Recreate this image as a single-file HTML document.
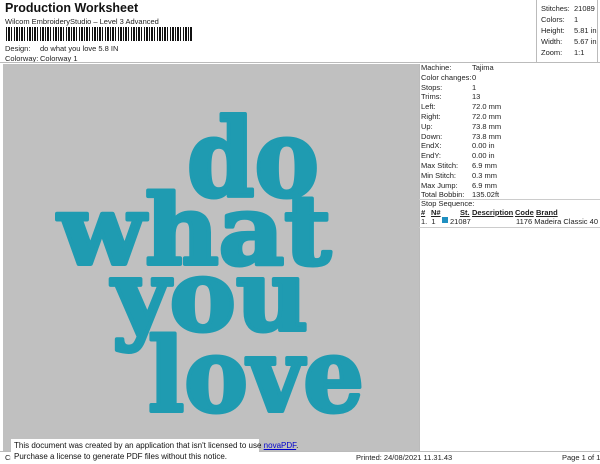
<!DOCTYPE html>
<html><head><meta charset="utf-8"><style>
*{margin:0;padding:0;box-sizing:border-box}
body{width:600px;height:464px;background:#fff;position:relative;overflow:hidden;font-family:"Liberation Sans",sans-serif;color:#222;font-size:7.5px}
.a{position:absolute;white-space:nowrap}
</style></head><body>
<div class="a" style="left:5px;top:1px;font-size:12.5px;font-weight:bold;color:#111">Production Worksheet</div>
<div class="a" style="left:5px;top:17px">Wilcom EmbroideryStudio – Level 3 Advanced</div>
<div class="a" style="left:6px;top:27px;width:186px;height:14px;background:repeating-linear-gradient(90deg,#111 0 1px,#fff 1px 2px,#111 2px 4px,#fff 4px 5px,#111 5px 6px,#fff 6px 8px,#111 8px 9px,#fff 9px 10px,#111 10px 12px,#fff 12px 13px)"></div>
<div class="a" style="left:5px;top:44px">Design:</div><div class="a" style="left:40px;top:44px">do what you love 5.8 IN</div>
<div class="a" style="left:5px;top:54px">Colorway:</div><div class="a" style="left:40px;top:54px">Colorway 1</div>
<div class="a" style="left:0;top:62px;width:600px;border-top:1px solid #bbb"></div>
<div class="a" style="left:536px;top:0;width:62px;height:62px;border-left:1px solid #bbb;border-right:1px solid #bbb"></div>
<div class="a" style="left:541px;top:3px;line-height:11px">Stitches:<br>Colors:<br>Height:<br>Width:<br>Zoom:</div>
<div class="a" style="left:574px;top:3px;line-height:11px">21089<br>1<br>5.81 in<br>5.67 in<br>1:1</div>
<div class="a" style="left:3px;top:64px;width:416px;height:387px;background:#c0c0c0"></div>
<svg class="a" style="left:0;top:0" width="600" height="464">
<g fill="#1f9bb1" font-family="DejaVu Serif" font-weight="bold" stroke="#1f9bb1" stroke-width="4" stroke-linejoin="round">
<text x="187" y="196" font-size="108" textLength="132" lengthAdjust="spacingAndGlyphs">do</text>
<text x="58" y="264" font-size="96" textLength="273" lengthAdjust="spacingAndGlyphs">what</text>
<text x="112" y="330" font-size="98" textLength="196" lengthAdjust="spacingAndGlyphs">you</text>
<text x="148" y="411" font-size="102" textLength="216" lengthAdjust="spacingAndGlyphs">love</text>
</g></svg>
<div class="a" style="left:419px;top:64px;width:181px;height:387px;border-left:1px solid #bbb"></div>
<div class="a" style="left:421px;top:63px;line-height:9.8px">Machine:<br>Color changes:<br>Stops:<br>Trims:<br>Left:<br>Right:<br>Up:<br>Down:<br>EndX:<br>EndY:<br>Max Stitch:<br>Min Stitch:<br>Max Jump:<br>Total Bobbin:</div>
<div class="a" style="left:472px;top:63px;line-height:9.8px">Tajima<br>0<br>1<br>13<br>72.0 mm<br>72.0 mm<br>73.8 mm<br>73.8 mm<br>0.00 in<br>0.00 in<br>6.9 mm<br>0.3 mm<br>6.9 mm<br>135.02ft</div>
<div class="a" style="left:419px;top:199px;width:181px;border-top:1px solid #ccc"></div>
<div class="a" style="left:421px;top:199px">Stop Sequence:</div>
<div class="a" style="left:421px;top:208px;font-weight:bold;text-decoration:underline">#</div>
<div class="a" style="left:431px;top:208px;font-weight:bold;text-decoration:underline">N#</div>
<div class="a" style="left:460px;top:208px;font-weight:bold;text-decoration:underline">St.</div>
<div class="a" style="left:472px;top:208px;font-weight:bold;text-decoration:underline">Description</div>
<div class="a" style="left:515px;top:208px;font-weight:bold;text-decoration:underline">Code</div>
<div class="a" style="left:536px;top:208px;font-weight:bold;text-decoration:underline">Brand</div>
<div class="a" style="left:421px;top:217px">1.&nbsp;&nbsp;1</div>
<div class="a" style="left:442px;top:217px;width:6px;height:6px;background:#1f8fc0"></div>
<div class="a" style="left:450px;top:217px">21087</div>
<div class="a" style="left:516px;top:217px">1176 Madeira Classic 40</div>
<div class="a" style="left:419px;top:227px;width:181px;border-top:1px solid #ccc"></div>
<div class="a" style="left:0;top:451px;width:600px;border-top:1px solid #bbb"></div>
<div class="a" style="left:5px;top:453px">Cr</div>
<div class="a" style="left:356px;top:453px">Printed: 24/08/2021 11.31.43</div>
<div class="a" style="left:562px;top:453px">Page 1 of 1</div>
<div class="a" style="left:11px;top:439px;width:248px;height:25px;background:#fff"></div>
<div class="a" style="left:14px;top:440px;font-size:8px;line-height:11px;color:#111">This document was created by an application that isn't licensed to use <span style="color:#00c;text-decoration:underline">novaPDF</span>.<br>Purchase a license to generate PDF files without this notice.</div>
</body></html>
